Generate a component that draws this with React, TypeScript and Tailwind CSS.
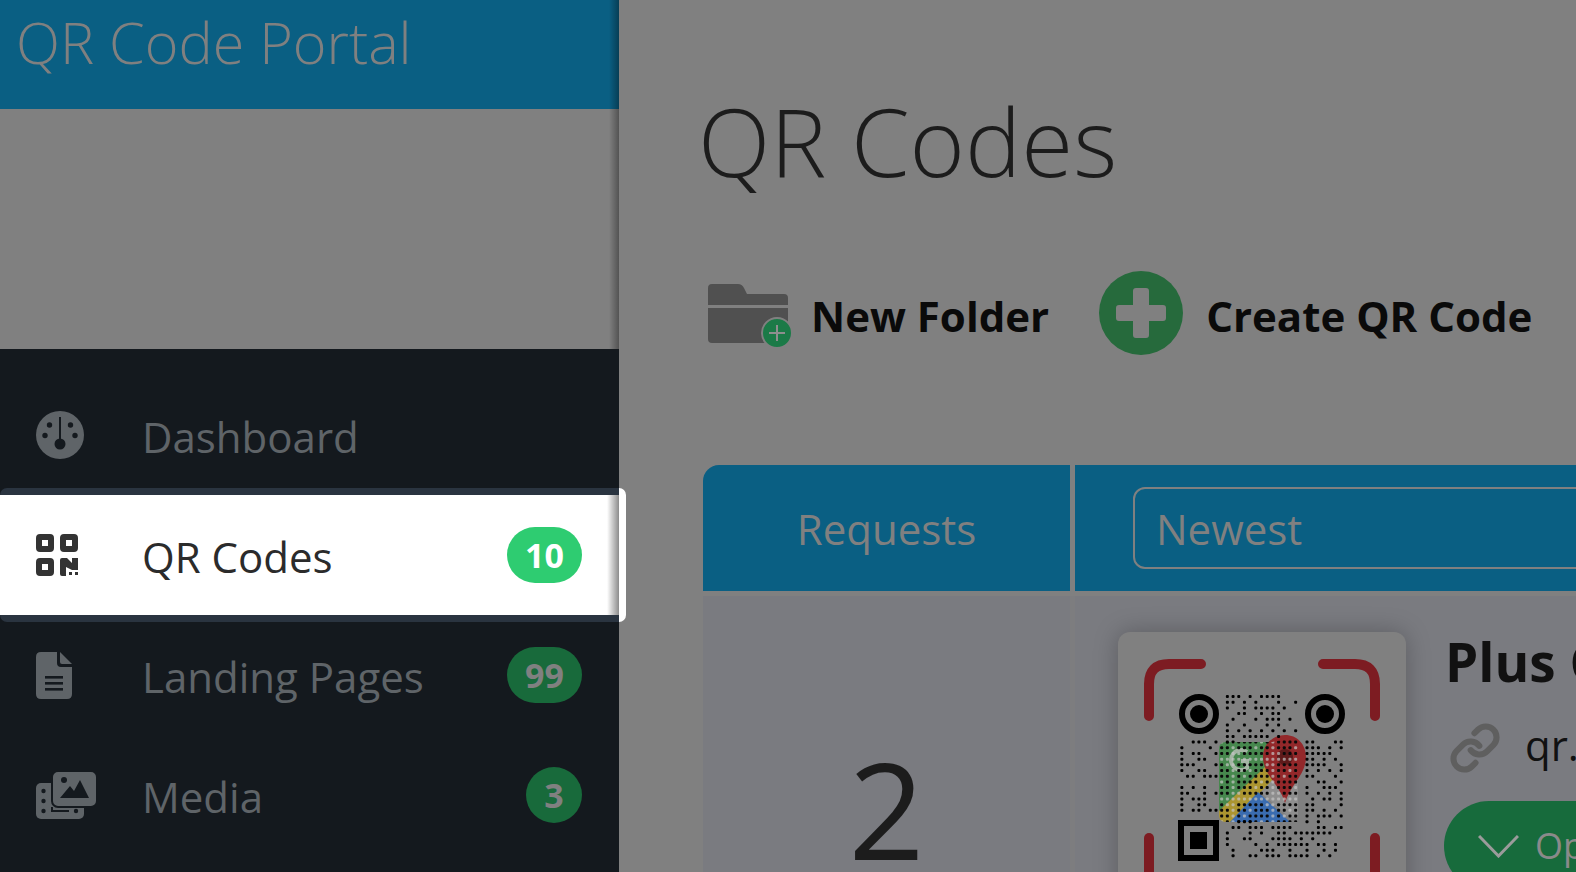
import { Link } from "lucide-react";

// dot columns per row of the 29x29 code, logo area is filled in separately
const qrRows: number[][] = [
  [8, 9, 10, 12, 14, 15, 16, 17],
  [8, 9, 11, 13, 17, 20],
  [8, 11, 13, 14, 15, 16, 18],
  [10, 11, 14, 16, 17],
  [9, 13, 15, 16, 17, 19],
  [8, 11, 15, 17],
  [8, 10, 12, 14, 16, 18, 20],
  [8, 9, 11, 12, 13, 14, 15, 17],
  [2, 3, 4, 6, 8, 9, 22, 23, 27, 28],
  [0, 5, 22, 23, 24, 26, 28],
  [0, 2, 3, 6, 22, 23, 24, 25, 26],
  [0, 3, 4, 22, 23, 25, 27],
  [0, 1, 2, 6, 22, 23, 24, 25, 28],
  [0, 3, 4, 22, 24, 26, 28],
  [1, 2, 4, 5, 6, 22, 23, 27],
  [24, 25, 28],
  [0, 2, 4, 22, 25, 26, 27],
  [0, 1, 4, 6, 22, 24, 26, 28],
  [0, 2, 3, 4, 23, 25, 26, 28],
  [0, 3, 4, 22, 23, 28],
  [0, 2, 3, 5, 6, 22, 23, 25, 27],
  [22, 24, 25, 26, 28],
  [10, 11, 12, 22, 24],
  [9, 10, 12, 13, 14, 16, 17, 18, 19, 24, 25, 27, 28],
  [8, 12, 14, 17, 18, 20, 21, 22, 23, 24, 25, 26],
  [8, 11, 12, 16, 17, 18, 19, 21, 23],
  [8, 13, 15, 17, 18, 19, 20, 21, 22, 24, 25, 27],
  [9, 14, 15, 16, 19, 22, 25, 27],
  [9, 12, 13, 15, 16, 17, 19, 20, 21, 22, 24, 26],
];

const cell = 5.69;
const dotX = (i: number) => 1179 + cell * (i + 0.5);
const dotY = (j: number) => 693.7 + cell * (j + 0.5);

function QrSticker() {
  const logoDots: { i: number; j: number; dark: boolean }[] = [];
  for (let j = 8; j < 23; j++) {
    for (let i = 7; i < 21; i++) {
      logoDots.push({ i, j, dark: (i * 3 + j * 5 + i * j) % 7 < 5 });
    }
  }
  return (
    <svg viewBox="1118 632 288 340" className="w-[288px] h-[340px] block">
      <defs>
        <clipPath id="logoClip">
          <path d="M1226 742H1272L1306 735V790L1298 822H1226Q1219 822 1219 815V749Q1219 742 1226 742Z" />
        </clipPath>
      </defs>
      {/* scan frame */}
      <g fill="none" stroke="#7d1c22" strokeWidth="10" strokeLinecap="round">
        <path d="M1201 664H1169Q1149 664 1149 684V716" />
        <path d="M1323 664H1355Q1375 664 1375 684V716" />
        <path d="M1149 838V990" />
        <path d="M1375 838V990" />
      </g>
      {/* finder eyes */}
      <circle cx="1199" cy="714" r="17" fill="none" stroke="#000" strokeWidth="6" />
      <circle cx="1199" cy="714" r="9" fill="#000" />
      <circle cx="1325" cy="714" r="17" fill="none" stroke="#000" strokeWidth="6" />
      <circle cx="1325" cy="714" r="9" fill="#000" />
      <rect x="1181" y="823" width="35" height="35" fill="none" stroke="#000" strokeWidth="6" />
      <rect x="1190" y="832" width="17" height="17" fill="#000" />
      {/* maps logo */}
      <path d="M1272 772L1298 776V815L1290 818L1258 790Z" fill="#8e8e8e" />
      <path d="M1226 742H1272V762L1219 813V749Q1219 742 1226 742Z" fill="#47884e" />
      <path d="M1266 766L1276 776L1232 822H1226Q1219 822 1219 815V811Z" fill="#ab9530" />
      <path d="M1230 822L1258 792L1290 822Z" fill="#3a6cb0" />
      <path d="M1285 803C1280 785 1263 775 1263 757C1263 744 1273 735 1285 735C1297 735 1306 744 1306 757C1306 775 1290 785 1285 803Z" fill="#93282a" />
      <circle cx="1285" cy="757" r="8" fill="#5e1a1a" />
      <path d="M1247 752A10 10 0 1 0 1247 768V761H1241" fill="none" stroke="#a3b5a3" strokeWidth="4" />
      {/* modules */}
      {logoDots.map((d) => (
        <rect
          key={`l${d.i}-${d.j}`}
          x={dotX(d.i) - 1.5}
          y={dotY(d.j) - 1.5}
          width="3"
          height="3"
          rx="1"
          fill={d.dark ? "#0a0a0a" : "#c4c4c4"}
          fillOpacity={d.dark ? 1 : 0.7}
          clipPath="url(#logoClip)"
        />
      ))}
      {qrRows.map((cols, j) =>
        cols.map((i) => (
          <rect key={`${i}-${j}`} x={dotX(i) - 1.5} y={dotY(j) - 1.5} width="3" height="3" rx="1" fill="#000" />
        ))
      )}
    </svg>
  );
}

function GaugeIcon() {
  return (
    <svg viewBox="0 0 48 48" className="w-[48px] h-[48px]">
      <circle cx="24" cy="24" r="24" fill="currentColor" />
      <rect x="23" y="6" width="2" height="26" fill="#14191e" />
      <circle cx="24" cy="33" r="5.5" fill="#14191e" />
      <g fill="#14191e">
        <circle cx="13.5" cy="14" r="2.7" />
        <circle cx="34.5" cy="14" r="2.7" />
        <circle cx="9" cy="24.5" r="2.7" />
        <circle cx="39" cy="24.5" r="2.7" />
      </g>
    </svg>
  );
}

function QrIcon() {
  return (
    <svg viewBox="0 0 42 42" className="w-[42px] h-[42px] text-[#333]" fill="currentColor">
      <path
        fillRule="evenodd"
        d="M4 0H14Q18 0 18 4V14Q18 18 14 18H4Q0 18 0 14V4Q0 0 4 0ZM6 6V12H12V6ZM28 0H38Q42 0 42 4V14Q42 18 38 18H28Q24 18 24 14V4Q24 0 28 0ZM30 6V12H36V6ZM4 24H14Q18 24 18 28V38Q18 42 14 42H4Q0 42 0 38V28Q0 24 4 24ZM6 30V36H12V30Z"
      />
      <path d="M26 24H31L36 29V24H42V36H36L30 33V42H26Q24 42 24 40V26Q24 24 26 24Z" />
      <rect x="33" y="38" width="3" height="3" />
      <rect x="39" y="38" width="3" height="3" />
    </svg>
  );
}

function DocIcon() {
  return (
    <svg viewBox="0 0 36 47" className="w-[36px] h-[47px]">
      <path d="M5 0H21V11Q21 15 25 15H36V42Q36 47 31 47H5Q0 47 0 42V5Q0 0 5 0Z" fill="currentColor" />
      <path d="M24 0L36 12H26Q24 12 24 10Z" fill="currentColor" />
      <g fill="#14191e">
        <rect x="9" y="24" width="18" height="2.6" />
        <rect x="9" y="30" width="18" height="2.6" />
        <rect x="9" y="36" width="18" height="2.6" />
      </g>
    </svg>
  );
}

function MediaIcon() {
  return (
    <svg viewBox="0 0 60 47" className="w-[60px] h-[47px]">
      <rect x="0" y="11" width="48" height="36" rx="5" fill="currentColor" />
      <rect x="16" y="-1" width="45" height="36" rx="6" fill="currentColor" stroke="#14191e" strokeWidth="2" />
      <circle cx="28" cy="8" r="3" fill="#14191e" />
      <path d="M24 26L34 14L38 19L44 8L53 26Z" fill="#14191e" />
      <g fill="#14191e">
        <circle cx="7.5" cy="19" r="2.2" />
        <circle cx="7.5" cy="29" r="2.2" />
        <circle cx="7.5" cy="39" r="2.2" />
        <circle cx="40" cy="39" r="2.2" />
      </g>
      <path d="M16 35V39H33" fill="none" stroke="#14191e" strokeWidth="2" />
    </svg>
  );
}

function FolderIcon() {
  return (
    <svg viewBox="0 0 84 64" className="w-[84px] h-[64px]">
      <path d="M4 0H30Q34 0 36 4L39 10H76Q80 10 80 14V21H0V4Q0 0 4 0Z" fill="#505050" />
      <path d="M0 24H80V55Q80 59 76 59H4Q0 59 0 55Z" fill="#505050" />
      <circle cx="69" cy="49" r="15" fill="#1b7a47" stroke="#808080" strokeWidth="2" />
      <path d="M69 41V57M61 49H77" stroke="#8e8e8e" strokeWidth="2" />
    </svg>
  );
}

interface NavItemProps {
  label: string;
  icon: React.ReactNode;
  badge?: string;
  active?: boolean;
}

function NavItem({ label, icon, badge, active = false }: NavItemProps) {
  return (
    <div
      className={`relative flex items-center h-[120px] shrink-0 ${
        active ? "bg-white text-[#2b2b2b]" : "text-[#5f6468]"
      }`}
    >
      {active && (
        <>
          <div className="absolute left-0 right-0 -top-[7px] h-[7px] bg-[#2a3440] rounded-tl-lg" />
          <div className="absolute left-0 right-0 -bottom-[7px] h-[7px] bg-[#2a3440] rounded-bl-lg" />
          <div className="absolute -right-[7px] -top-[7px] -bottom-[7px] w-[7px] bg-white rounded-r-lg" />
          <div className="absolute right-0 top-0 bottom-0 w-[12px] bg-gradient-to-r from-transparent to-black/45" />
        </>
      )}
      <div className="w-[142px] pl-[36px] shrink-0 flex items-center">{icon}</div>
      <span className="text-[42px] leading-none pt-[3px]">{label}</span>
      {badge && (
        <span
          className={`ml-auto mr-[37px] h-[56px] min-w-[56px] px-[18px] rounded-full flex items-center justify-center text-[34px] font-bold leading-none ${
            active ? "bg-[#2ecc71] text-white" : "bg-[#186a3b] text-[#808080]"
          }`}
        >
          {badge}
        </span>
      )}
    </div>
  );
}

export default function App() {
  return (
    <div className="flex w-[1576px] h-[872px] overflow-hidden bg-[#808080] font-['Open_Sans',sans-serif]">
      <aside className="relative z-10 w-[619px] shrink-0 flex flex-col">
        <div className="h-[109px] shrink-0 bg-[#0a5f83] text-[#808080] text-[57.5px] font-light leading-none pl-[16px] pt-[14px]">
          QR Code Portal
        </div>
        <div className="h-[240px] shrink-0 bg-[#808080]" />
        <nav className="flex-1 min-h-0 bg-[#14191e] pt-[26px] flex flex-col">
          <NavItem label="Dashboard" icon={<GaugeIcon />} />
          <NavItem label="QR Codes" icon={<QrIcon />} badge="10" active />
          <NavItem label="Landing Pages" icon={<DocIcon />} badge="99" />
          <NavItem label="Media" icon={<MediaIcon />} badge="3" />
        </nav>
        <div className="absolute right-0 top-0 h-[349px] w-[10px] bg-gradient-to-r from-transparent to-black/35" />
      </aside>

      <main className="flex-1 min-w-0 overflow-hidden pl-[84px]">
        <h1 className="text-[94.5px] font-light text-[#1c1c1c] leading-[95px] mt-[93px] -ml-[5px]">QR Codes</h1>

        <div className="flex items-center h-[86px] mt-[82px] text-[42px] font-bold text-[#0a0a0a] whitespace-nowrap">
          <div className="ml-[5px] w-[103px] shrink-0 pt-[6px]">
            <FolderIcon />
          </div>
          <span className="pt-[4px]">New Folder</span>
          <div className="ml-[50px] w-[84px] h-[84px] rounded-full bg-[#266a3c] flex items-center justify-center shrink-0">
            <svg viewBox="0 0 50 50" className="w-[50px] h-[50px]">
              <path
                d="M17 3Q17 0 20 0H30Q33 0 33 3V17H47Q50 17 50 20V30Q50 33 47 33H33V47Q33 50 30 50H20Q17 50 17 47V33H3Q0 33 0 30V20Q0 17 3 17H17Z"
                fill="#808080"
              />
            </svg>
          </div>
          <span className="ml-[23px] pt-[4px]">Create QR Code</span>
        </div>

        <div className="w-[1200px] mt-[109px]">
          <div className="flex gap-[5px] h-[126px]">
            <div className="w-[367px] shrink-0 bg-[#0a5f83] rounded-tl-2xl flex items-center justify-center text-[42px] text-[#808080]">
              Requests
            </div>
            <div className="flex-1 bg-[#0a5f83] pt-[22px] pl-[58px]">
              <div className="h-[82px] border-2 border-[#808080] rounded-xl flex items-center pl-[21px] text-[42px] text-[#808080]">
                Newest
              </div>
            </div>
          </div>
          <div className="flex gap-[5px] mt-[5px] h-[400px] bg-[#7d7d7f]">
            <div className="w-[367px] shrink-0 bg-[#7a7b80] flex justify-center text-[133px] leading-[110px] text-[#1c1c1c] pt-[158px]">
              2
            </div>
            <div className="flex-1 bg-[#7a7b80] flex pt-[36px] pl-[43px]">
              <div className="w-[288px] h-[340px] shrink-0 bg-[#808080] rounded-xl shadow-[0_0_24px_rgba(0,0,0,0.25)]">
                <QrSticker />
              </div>
              <div className="ml-[42px] flex flex-col whitespace-nowrap">
                <div className="text-[53px] font-bold leading-none text-[#111] mt-[3px] -ml-[3px]">Plus Code</div>
                <div className="flex items-center mt-[28px] ml-[1px] text-[42px] leading-none text-[#111]">
                  <Link className="w-[52px] h-[52px] text-[#5f5f5f] mt-[6px]" strokeWidth={2.8} />
                  <span className="ml-[24px]">qr.link</span>
                </div>
                <div className="mt-[27px] -ml-[4px] h-[90px] w-[400px] rounded-full bg-[#176b3c] flex items-center pl-[34px] text-[36px] text-[#8a8a8a]">
                  <svg viewBox="0 0 41 23" className="w-[41px] h-[23px]" fill="none" stroke="#9b9b9b" strokeWidth="3">
                    <path d="M1 1L20.5 21L40 1" />
                  </svg>
                  <span className="ml-[16px]">Open</span>
                </div>
              </div>
            </div>
          </div>
        </div>
      </main>
    </div>
  );
}
